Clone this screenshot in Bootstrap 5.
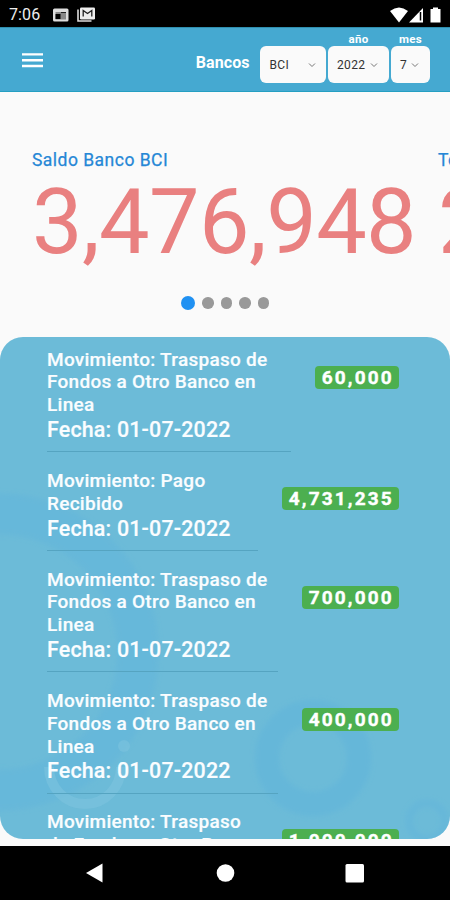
<!DOCTYPE html>
<html lang="es">
<head>
<meta charset="utf-8">
<meta name="viewport" content="width=device-width, initial-scale=1">
<title>Bancos</title>
<link href="https://cdn.jsdelivr.net/npm/bootstrap@5.3.0/dist/css/bootstrap.min.css" rel="stylesheet">
<style>
html, body { height: 100%; }
body { font-family: Roboto, "Liberation Sans", sans-serif; background: #fafafa; overflow: hidden; }
.screen { width: 450px; height: 900px; }
.status-bar { height: 27px; background: #000; color: #eee; font-size: 16px; letter-spacing: .1px; padding: 2px 8px 0 9px; }
.status-apps { margin-left: 13px; }
.app-bar { height: 65px; background: #45a9d1; border-top: 1px solid #2f8fae; border-bottom: 1.5px solid #249fc2; padding: 0 20px 8px 22px; gap: 2px; }
.app-title { font-size: 16px; line-height: 20px; font-weight: 700; margin: 0 8px 10px 0; letter-spacing: .05px; }
.menu-icon { margin-bottom: 15px; }
.filter-label { font-size: 11.5px; line-height: 13px; font-weight: 700; letter-spacing: .25px; margin-bottom: .5px; }
.filter-box { height: 37px; border-radius: 6px; background: #fafafa; color: #333; font-size: 12px; padding: 1px 10px 0; letter-spacing: .35px; }
.w-bank { width: 66px; margin-right: .5px; }
.w-year { width: 61px; }
.w-year .filter-box { padding: 1px 11px 0 9px; }
.w-month { width: 39px; }
.w-month .filter-box { padding: 1px 11px 0 9px; }
.balances { height: 203px; margin-left: 32px; padding-top: 56px; }
.slide-item { width: 406px; }
.slide-label { font-size: 17.5px; line-height: 24px; color: #2587d6; letter-spacing: .48px; -webkit-text-stroke: .25px #2587d6; }
.slide-value { font-size: 90px; line-height: 102px; color: #e98080; letter-spacing: -.6px; }
.dots { height: 14px; gap: 7px; margin-top: 1px; }
.dots span { width: 11.5px; height: 11.5px; border-radius: 50%; background: #999; }
.dots .active-dot { width: 14px; height: 14px; background: #2091f2; }
.movements { margin-top: 27px; height: 502px; border-radius: 23px; background: #6cbbd8; padding: 11.5px 51px 0 47px; }
.backdrop { z-index: 0; }
.movement { gap: 24px; color: #fafdff; z-index: 1; margin-bottom: 17.85px; }
.movement-text { border-bottom: 1px solid #55a4c1; padding-bottom: 9px; font-weight: 500; }
.description { font-size: 19px; line-height: 22.8px; letter-spacing: .27px; -webkit-text-stroke: .2px #fafdff; }
.date-line { font-size: 21.4px; line-height: 25.2px; letter-spacing: .19px; -webkit-text-stroke: .2px #fafdff; }
.amount { margin-top: 17.5px; height: 23px; border-radius: 4px; background: #4caf50; color: #fff; font-size: 19px; line-height: 23px; font-weight: 700; letter-spacing: 2.15px; padding: 0 5.2px 0 6.5px; -webkit-text-stroke: .4px #fff; }
.nav-keys { height: 54px; background: #000; }
</style>
<script src="https://cdn.jsdelivr.net/npm/bootstrap@5.3.0/dist/js/bootstrap.bundle.min.js"></script>
</head>
<body>
<div class="screen d-flex flex-column overflow-hidden">
  <div class="status-bar d-flex align-items-center flex-shrink-0">
    <span>7:06</span>
    <svg class="status-apps" width="44" height="16" viewBox="0 0 44 16">
      <rect x="0" y="1.500" width="15.500" height="13" rx="1.500" fill="#ddd"/><path d="M2.500 5H13V12.500H2.500Z" fill="#888"/><rect x="2.500" y="7" width="5" height="5" fill="#000"/><path d="M8 5.500H13" stroke="#222"/>
      <path d="M25 2.500V14H38.500" fill="none" stroke="#ddd" stroke-width="1.600"/><rect x="27" y="0.500" width="15" height="12" rx="1.300" fill="#eee"/><path d="M30.200 9.500V3.500L34.500 6.500L38.800 3.500V9.500" fill="none" stroke="#222" stroke-width="1.300"/>
    </svg>
    <svg class="ms-auto" width="52" height="16" viewBox="0 0 52 16" fill="#fff">
      <path d="M0 4Q9 -3 18 4L9 15.500Z"/><path d="M19 15.500L33 1V15.500Z"/><path d="M30.500 5V13.500" stroke="#000" stroke-width="1.500"/><path d="M43 0.500H48V2H50.500V15.500H40.500V2H43Z"/>
    </svg>
  </div>
  <nav class="app-bar d-flex align-items-end flex-shrink-0 text-white">
    <svg class="menu-icon" width="21" height="16" viewBox="0 0 21 16" stroke="#fff" stroke-width="2.400"><path d="M0 2.400H21M0 8.200H21M0 14H21"/></svg>
    <span class="app-title ms-auto">Bancos</span>
    <div class="w-bank"><div class="filter-box d-flex align-items-center justify-content-between"><span>BCI</span><svg width="8" height="6" viewBox="0 0 8 6" fill="none" stroke="#777"><path d="M1 1.500L4 4.500L7 1.500"/></svg></div></div>
    <div class="w-year"><div class="filter-label text-center">año</div><div class="filter-box d-flex align-items-center justify-content-between"><span>2022</span><svg width="8" height="6" viewBox="0 0 8 6" fill="none" stroke="#777"><path d="M1 1.500L4 4.500L7 1.500"/></svg></div></div>
    <div class="w-month"><div class="filter-label text-center">mes</div><div class="filter-box d-flex align-items-center justify-content-between"><span>7</span><svg width="8" height="6" viewBox="0 0 8 6" fill="none" stroke="#777"><path d="M1 1.500L4 4.500L7 1.500"/></svg></div></div>
  </nav>
  <section class="balances d-flex flex-shrink-0 overflow-hidden">
    <div class="slide-item flex-shrink-0"><div class="slide-label">Saldo Banco BCI</div><div class="slide-value">3,476,948</div></div>
    <div class="slide-item flex-shrink-0"><div class="slide-label">Total</div><div class="slide-value">2</div></div>
  </section>
  <div class="dots d-flex justify-content-center align-items-center flex-shrink-0"><span class="active-dot"></span><span></span><span></span><span></span><span></span></div>
  <main class="movements position-relative overflow-hidden flex-shrink-0">
    <svg class="backdrop position-absolute top-0 start-0" width="450" height="502" viewBox="0 0 450 502" fill="none">
      <defs><filter id="soft"><feGaussianBlur stdDeviation="2.500"/></filter></defs>
      <g filter="url(#soft)">
        <circle cx="0" cy="315" r="138" stroke="#62b5da" stroke-opacity=".6" stroke-width="41"/>
        <circle cx="313" cy="421" r="46" stroke="#62b5da" stroke-opacity=".7" stroke-width="24"/>
        <circle cx="427" cy="484" r="18" stroke="#62b5da" stroke-opacity=".55" stroke-width="7"/>
      </g>
      <path d="M49 430A36 37 0 1 0 121 430" stroke="#80c5e0" stroke-opacity=".5" stroke-width="10"/><circle cx="124" cy="409" r="6" fill="#80c5e0" fill-opacity=".5"/>
    </svg>
    <div class="movement position-relative d-flex align-items-start"><div class="movement-text flex-grow-1"><div class="description">Movimiento: Traspaso de Fondos a Otro Banco en Linea</div><div class="date-line">Fecha: 01-07-2022</div></div><span class="amount">60,000</span></div>
    <div class="movement position-relative d-flex align-items-start"><div class="movement-text flex-grow-1"><div class="description">Movimiento: Pago Recibido</div><div class="date-line">Fecha: 01-07-2022</div></div><span class="amount">4,731,235</span></div>
    <div class="movement position-relative d-flex align-items-start"><div class="movement-text flex-grow-1"><div class="description">Movimiento: Traspaso de Fondos a Otro Banco en Linea</div><div class="date-line">Fecha: 01-07-2022</div></div><span class="amount">700,000</span></div>
    <div class="movement position-relative d-flex align-items-start"><div class="movement-text flex-grow-1"><div class="description">Movimiento: Traspaso de Fondos a Otro Banco en Linea</div><div class="date-line">Fecha: 01-07-2022</div></div><span class="amount">400,000</span></div>
    <div class="movement position-relative d-flex align-items-start"><div class="movement-text flex-grow-1"><div class="description">Movimiento: Traspaso de Fondos a Otro Banco en Linea</div><div class="date-line">Fecha: 01-07-2022</div></div><span class="amount">1,000,000</span></div>
  </main>
  <footer class="nav-keys mt-auto flex-shrink-0 d-flex justify-content-center align-items-center">
    <svg width="280" height="20" viewBox="0 0 280 20" fill="#fff"><path d="M1 10L17.500 .5V19.500Z"/><circle cx="140.500" cy="10" r="8.800"/><rect x="260.500" y="1" width="18.500" height="18.500" rx="1.500"/></svg>
  </footer>
</div>
</body>
</html>
